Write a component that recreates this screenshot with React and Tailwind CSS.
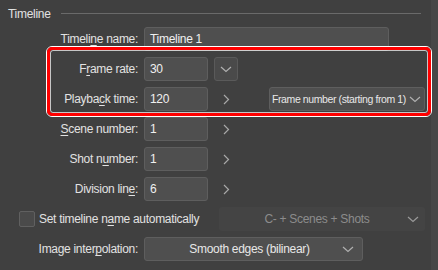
import React from 'react';

const font = { fontFamily: '"Liberation Sans", Arial, sans-serif' };

function U({ children }) {
  return <span className="underline underline-offset-2">{children}</span>;
}

function Chevron() {
  return (
    <div className="w-[24px] h-[24px] flex items-center justify-center">
      <svg width="7" height="11" viewBox="0 0 7 11" fill="none">
        <path d="M1 1 L5.5 5.5 L1 10" stroke="#a8a8a8" strokeWidth="1.2" />
      </svg>
    </div>
  );
}

function Down({ color = '#b0b0b0' }) {
  return (
    <svg width="12" height="7" viewBox="0 0 12 7" fill="none" className="shrink-0">
      <path d="M1 1 L6 5.5 L11 1" stroke={color} strokeWidth="1.2" />
    </svg>
  );
}

function Label({ children }) {
  return <div className="w-[144px] pr-[6px] text-right text-[#e2e2e2] shrink-0 whitespace-nowrap">{children}</div>;
}

function Field({ value, w = 'w-[64px]' }) {
  return (
    <div className={`${w} h-[24px] rounded-[3px] bg-[#4f4f4f] border border-[#5e5e5e] flex items-center pl-[5px] text-[#f0f0f0]`}>
      {value}
    </div>
  );
}

function Row({ label, children }) {
  return (
    <div className="h-[30px] flex items-center">
      <Label>{label}</Label>
      {children}
    </div>
  );
}

export default function App() {
  return (
    <div className="w-[438px] h-[270px] bg-[#404040] flex overflow-hidden text-[12px] tracking-[-0.3px] leading-none" style={font}>
      <div className="relative flex-1 flex flex-col pt-[3px]">
        <div className="h-[21px] flex items-center pl-[8px] gap-[10px]">
          <span className="text-[#e2e2e2]">Timeline</span>
          <div className="flex-1 h-px bg-[#6a6a6a] mr-[10px]" />
        </div>

        <Row label={<>Timeli<U>n</U>e name:</>}>
          <Field value="Timeline 1" w="w-[245px]" />
        </Row>
        <Row label={<>F<U>r</U>ame rate:</>}>
          <Field value="30" />
          <div className="ml-[6px] w-[24px] h-[24px] rounded-[3px] bg-[#4a4a4a] border border-[#5a5a5a] flex items-center justify-center">
            <Down />
          </div>
        </Row>
        <Row label={<>Playba<U>c</U>k time:</>}>
          <Field value="120" />
          <div className="ml-[6px]"><Chevron /></div>
          <div className="ml-[31px] w-[156px] h-[24px] rounded-[3px] bg-[#4f4f4f] border border-[#5e5e5e] flex items-center justify-between pl-[2px] pr-[3px] text-[#e8e8e8] text-[10.5px] tracking-[-0.4px] whitespace-nowrap">
            <span>Frame number (starting from 1)</span>
            <Down />
          </div>
        </Row>
        <Row label={<><U>S</U>cene number:</>}>
          <Field value="1" />
          <div className="ml-[6px]"><Chevron /></div>
        </Row>
        <Row label={<>Shot n<U>u</U>mber:</>}>
          <Field value="1" />
          <div className="ml-[6px]"><Chevron /></div>
        </Row>
        <Row label={<>Division lin<U>e</U>:</>}>
          <Field value="6" />
          <div className="ml-[6px]"><Chevron /></div>
        </Row>

        <div className="h-[30px] flex items-center">
          <div className="ml-[19px] w-[16px] h-[16px] rounded-[2px] bg-[#4a4a4a] border border-[#606060] shrink-0" />
          <span className="ml-[4px] text-[#e2e2e2] whitespace-nowrap">Set timeline n<U>a</U>me automatically</span>
          <div className="ml-auto mr-[6px] w-[206px] h-[24px] rounded-[3px] bg-[#444444] flex items-center justify-between pr-[6px] shrink-0">
            <span className="flex-1 text-center text-[#8c8c8c] pl-[8px]">C- + Scenes + Shots</span>
            <Down color="#9a9a9a" />
          </div>
        </div>

        <Row label={<>Image inter<U>p</U>olation:</>}>
          <div className="w-[219px] h-[24px] rounded-[3px] bg-[#4f4f4f] border border-[#5e5e5e] flex items-center pr-[8px] text-[#e8e8e8]">
            <span className="flex-1 text-center pl-[12px]">Smooth edges (bilinear)</span>
            <Down />
          </div>
        </Row>

        <div className="absolute left-[46px] top-[46px] w-[386px] h-[71px] rounded-[6px] border border-white pointer-events-none">
          <div className="w-full h-full rounded-[5px] border-[3px] border-[#ff0000]">
            <div className="w-full h-full rounded-[3px] border border-white/70" />
          </div>
        </div>
      </div>
      <div className="w-[7px] bg-[#474747]" />
    </div>
  );
}
